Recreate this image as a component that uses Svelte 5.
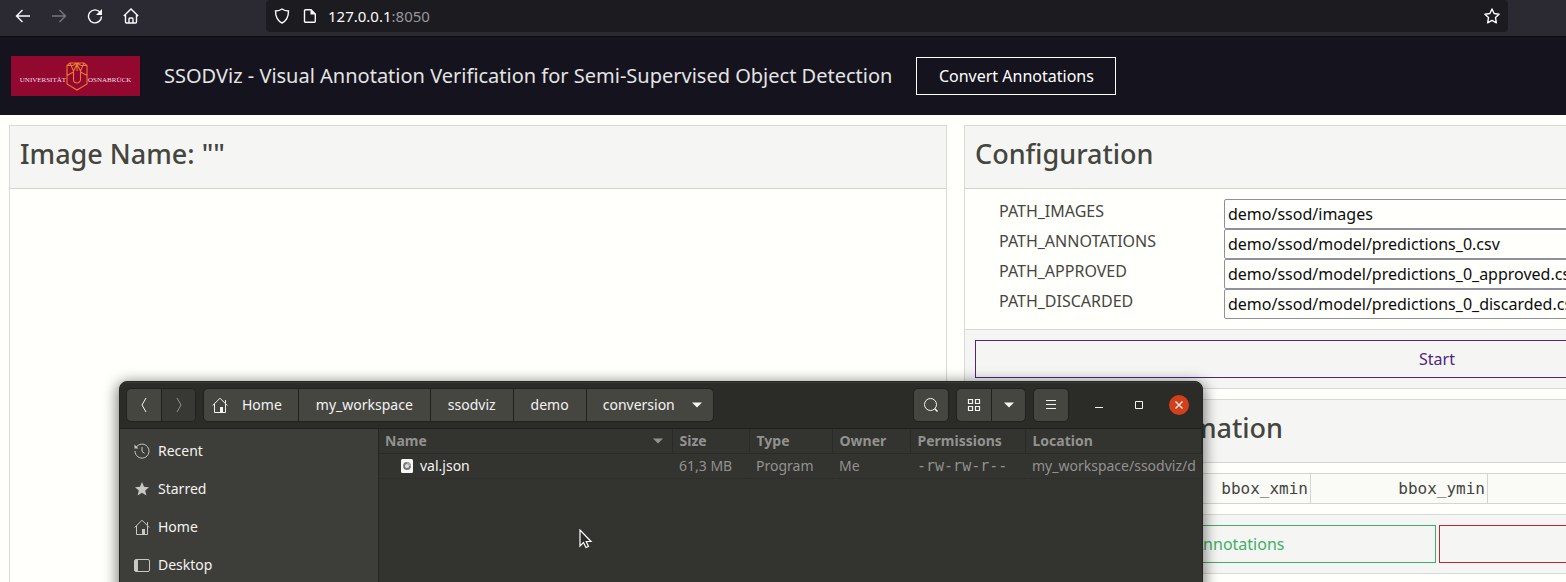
<script>
  const paths = [
    { id: 'images', label: 'PATH_IMAGES', value: 'demo/ssod/images' },
    { id: 'annotations', label: 'PATH_ANNOTATIONS', value: 'demo/ssod/model/predictions_0.csv' },
    { id: 'approved', label: 'PATH_APPROVED', value: 'demo/ssod/model/predictions_0_approved.csv' },
    { id: 'discarded', label: 'PATH_DISCARDED', value: 'demo/ssod/model/predictions_0_discarded.csv' }
  ];
  const crumbs = ['my_workspace', 'ssodviz', 'demo'];
  const places = ['Recent', 'Starred', 'Home', 'Desktop'];
</script>

{#snippet house()}
  <svg width="16" height="16" viewBox="0 0 16 16" fill="none" stroke="currentColor">
    <path d="M.7 8.5 8 1.2l7.3 7.3M2.5 7v8.5h11V7M13.5 6V3" />
    <path d="M8 10h3v5.5H8z" fill="currentColor" stroke="none" />
  </svg>
{/snippet}

<div class="screen">
  <nav class="toolbar" aria-label="Browser">
    <button class="nav" aria-label="Back">
      <svg width="16" height="16" viewBox="0 0 16 16"><path d="M15 8H1.5M7.5 2l-6 6 6 6" /></svg>
    </button>
    <button class="nav dim" aria-label="Forward">
      <svg width="16" height="16" viewBox="0 0 16 16"><path d="M1 8h13.5M8.5 2l6 6-6 6" /></svg>
    </button>
    <button class="nav" aria-label="Reload">
      <svg width="16" height="16" viewBox="0 0 16 16"><path d="M13 4.200A6.500 6.500 0 1 0 14.500 8.500" /><path d="M15 1v6H9z" fill="currentColor" stroke="none" /></svg>
    </button>
    <button class="nav" aria-label="Home page">
      <svg width="16" height="16" viewBox="0 0 16 16"><path d="M.8 8 8 1l7.200 7M2.500 7v7a1 1 0 0 0 1 1h9a1 1 0 0 0 1-1V7M6 15v-4a1 1 0 0 1 1-1h2a1 1 0 0 1 1 1v4" /></svg>
    </button>
    <div class="urlbar">
      <svg width="16" height="16" viewBox="0 0 16 16"><path d="M8 1c2 1.500 4.300 2 6.500 2 0 5.500-1.500 9.500-6.500 12C3 12.500 1.500 8.500 1.500 3 3.700 3 6 2.500 8 1z" /></svg>
      <svg class="doc" width="16" height="16" viewBox="0 0 16 16"><path d="M3.500 1.700h5.500l4.300 4.300v7.300a1 1 0 0 1-1 1H3.500a1 1 0 0 1-1-1V2.700a1 1 0 0 1 1-1z" /><path d="M8.500 1.500v5h5z" fill="currentColor" stroke="none" /></svg>
      <span class="url">127.0.0.1<span class="port">:8050</span></span>
      <button class="star" aria-label="Bookmark">
        <svg width="16" height="16" viewBox="0 0 16 16"><path d="M8 1l2.100 4.500 5 .7-3.600 3.400.9 5.200L8 12.400l-4.400 2.400.9-5.200L.9 6.200l5-.7z" stroke-linejoin="round" /></svg>
      </button>
    </div>
  </nav>

  <header class="banner">
    <div class="logo">
      <span>UNIVERSITÄT</span>
      <svg width="22" height="30" viewBox="0 0 22 30" fill="none" stroke="#ea7a34" stroke-width="1.1">
        <path d="M4 2 1 4.500V23l10 6 10-6V4.500L18 2zM1 14.500 7.500 11M21 14.500 14.500 11M4 2l3.500 8v8.500a3.500 3.500 0 0 0 7 0V10L18 2M1 4.500h6L11 2l4 2.500h6M11 2v8M11 3 7.500 10M11 3l3.500 7" />
      </svg>
      <span>OSNABRÜCK</span>
    </div>
    <h1>SSODViz - Visual Annotation Verification for Semi-Supervised Object Detection</h1>
    <button class="convert">Convert Annotations</button>
  </header>

  <main>
    <section class="panel image">
      <h2>Image Name: ""</h2>
    </section>
    <div class="side">
      <section class="panel">
        <h2>Configuration</h2>
        <form>
          {#each paths as p}
            <label for={p.id}>{p.label}</label>
            <input id={p.id} type="text" value={p.value} />
          {/each}
        </form>
        <div class="actions"><button class="start">Start</button></div>
      </section>
      <section class="panel">
        <h2>Annotation Information</h2>
        <div class="tablebox">
          <table>
            <thead>
              <tr><th>image_id</th><th>bbox_xmin</th><th>bbox_ymin</th><th>bbox_xmax</th><th>bbox_ymax</th></tr>
            </thead>
          </table>
        </div>
        <div class="actions">
          <button class="approve">Approve Annotations</button>
          <button class="discard">Discard Annotations</button>
        </div>
      </section>
    </div>
  </main>

  <div class="window">
    <div class="titlebar">
      <div class="group">
        <button aria-label="Previous folder"><svg width="16" height="18" viewBox="0 0 16 18"><path d="M10 2 6 9l4 7" /></svg></button>
        <button class="off" aria-label="Next folder"><svg width="16" height="18" viewBox="0 0 16 18"><path d="M6 2l4 7-4 7" /></svg></button>
      </div>
      <div class="group crumbs">
        <button class="homecrumb">{@render house()}Home</button>
        {#each crumbs as c}<button>{c}</button>{/each}
        <button class="current">conversion<svg width="10" height="6" viewBox="0 0 10 6"><path d="M0 .5h10L5 5.500z" fill="currentColor" stroke="none" /></svg></button>
      </div>
      <div class="tools">
        <div class="group"><button aria-label="Search"><svg width="16" height="16" viewBox="0 0 16 16"><circle cx="7.500" cy="7.500" r="6" /><path d="M11.800 11.800 14.500 14.500" stroke-width="1.600" /></svg></button></div>
        <div class="group">
          <button aria-label="Grid view"><svg width="14" height="14" viewBox="0 0 14 14"><path d="M1.500 1.500h4v4h-4zM8.500 1.500h4v4h-4zM1.500 8.500h4v4h-4zM8.500 8.500h4v4h-4z" stroke-width="1.200" /></svg></button>
          <button aria-label="View options"><svg width="10" height="6" viewBox="0 0 10 6"><path d="M0 .5h10L5 5.500z" fill="currentColor" stroke="none" /></svg></button>
        </div>
        <div class="group"><button aria-label="Menu"><svg width="12" height="12" viewBox="0 0 12 12"><path d="M1 1.500h10M1 5.500h10M1 9.500h10" /></svg></button></div>
        <div class="wm">
          <button aria-label="Minimize"><svg width="20" height="20" viewBox="0 0 20 20"><path d="M6 12.500h8" /></svg></button>
          <button aria-label="Maximize"><svg width="20" height="20" viewBox="0 0 20 20"><path d="M6.500 6.500h7v7h-7z" /></svg></button>
          <button class="close" aria-label="Close"><svg width="20" height="20" viewBox="0 0 20 20"><path d="M6.500 6.500l7 7M13.500 6.500l-7 7" stroke-width="1.300" /></svg></button>
        </div>
      </div>
    </div>
    <div class="content">
      <ul class="places">
        {#each places as place}
          <li>
            {#if place === 'Recent'}
              <svg width="16" height="16" viewBox="0 0 16 16"><path d="M2 4.500a7 7 0 1 1-1 3.500M8 4v4.500l2.500 1.800" /><path d="M.5 1.500v4h4z" fill="currentColor" stroke="none" /></svg>
            {:else if place === 'Starred'}
              <svg width="16" height="16" viewBox="0 0 16 16"><path d="M8 1l2 4.800 5 .4-3.800 3.300 1.200 5L8 11.800l-4.400 2.700 1.200-5L1 6.200l5-.4z" fill="currentColor" stroke="none" /></svg>
            {:else if place === 'Home'}
              {@render house()}
            {:else}
              <svg width="16" height="16" viewBox="0 0 16 16"><rect x=".5" y="2.500" width="15" height="12" rx="1.500" /><path d="M1 3h3v11H1z" fill="currentColor" stroke="none" /></svg>
            {/if}
            <span>{place}</span>
          </li>
        {/each}
      </ul>
      <div class="files">
        <table>
          <colgroup><col class="c1" /><col class="c2" /><col class="c3" /><col class="c4" /><col class="c5" /><col /></colgroup>
          <thead>
            <tr>
              <th><div class="sort">Name<svg width="10" height="6" viewBox="0 0 10 6"><path d="M0 .5h10L5 5.500z" fill="currentColor" /></svg></div></th>
              <th>Size</th><th>Type</th><th>Owner</th><th>Permissions</th><th>Location</th>
            </tr>
          </thead>
          <tbody>
            <tr>
              <td>
                <div class="file">
                  <svg width="12" height="14" viewBox="0 0 12 14"><rect width="12" height="14" rx="1.500" fill="#f7f7f5" /><circle cx="6" cy="7" r="3" fill="#ddd" stroke="#777" stroke-width="1.800" /><path d="M6 4a3 3 0 0 1 3 3" fill="none" stroke="#aaa" stroke-width="1.800" /></svg>
                  val.json
                </div>
              </td>
              <td>61,3 MB</td><td>Program</td><td>Me</td><td class="mono">-rw-rw-r--</td><td>my_workspace/ssodviz/d</td>
            </tr>
          </tbody>
        </table>
      </div>
    </div>
  </div>

  <svg class="pointer" width="14" height="20" viewBox="0 0 14 20">
    <path d="M1 1v16l3.500-3.500L7 18.500l2.500-1-2.300-5H12z" fill="#2b2b28" stroke="#fff" stroke-width="1.200" />
  </svg>
</div>

<style>
  :global(body) { margin: 0; background: #fffffc; }
  .screen {
    position: relative;
    height: 100vh;
    overflow: hidden;
    background: #fffffc;
    color: #454540;
    font: 16px/24px "Noto Sans", sans-serif;
  }
  .screen * { box-sizing: border-box; }
  button { font: inherit; color: inherit; background: none; border: 0; padding: 0; margin: 0; }
  svg { display: block; flex: none; }

  .toolbar {
    display: flex;
    height: 37px;
    padding: 0 58px 4px 5px;
    background: #2b2a33;
    border-bottom: 1px solid #0c0c0e;
    color: #fbfbfe;
  }
  .toolbar svg, .titlebar svg, .places svg { fill: none; stroke: currentColor; }
  .toolbar svg { stroke-width: 1.4; }
  .nav { display: grid; place-items: center; width: 36px; }
  .nav.dim { color: #77767d; }
  .urlbar {
    display: flex;
    flex: 1;
    align-items: center;
    margin-left: 117px;
    padding: 0 8px;
    background: #1c1b1f;
    border-radius: 4px;
  }
  .doc { margin: 0 10px 0 12px; }
  .url { font-size: 15px; }
  .port { color: #97979d; }
  .star { margin-left: auto; }

  .banner {
    display: flex;
    align-items: center;
    height: 78px;
    padding: 0 11px;
    background: #15131d;
    color: #e4e4e4;
    white-space: nowrap;
  }
  .logo {
    display: flex;
    align-items: center;
    justify-content: center;
    width: 129px;
    height: 40px;
    background: #92082f;
    color: #f3dfe4;
    font: 7px/10px "Liberation Serif", serif;
  }
  .logo span { padding-top: 8px; }
  h1 { margin: 0 24px; font-size: 20px; line-height: 28px; font-weight: 400; }
  .convert { height: 38px; width: 200px; border: 1px solid #fff; color: #fff; }

  main {
    display: grid;
    grid-template-columns: 938fr 946fr;
    gap: 17px;
    min-width: 1919px;
    padding: 10px 9px;
  }
  .side { display: flex; flex-direction: column; gap: 10px; }
  .panel { border: 1px solid #d8dad5; }
  .panel.image { min-height: 600px; }
  h2 {
    margin: 0;
    padding: 11px 10px 17px;
    background: #f5f6f3;
    border-bottom: 1px solid #d3d5d0;
    font-size: 27px;
    line-height: 34px;
    font-weight: 500;
  }
  form {
    display: grid;
    grid-template-columns: 225px 1fr;
    grid-auto-rows: 30px;
    padding: 10px 34px;
  }
  input {
    width: 100%;
    min-width: 0;
    padding: 1px 3px;
    border: 1px solid #8f8f9d;
    border-radius: 2px;
    background: #fffffc;
    color: #0c0c0d;
    font: inherit;
  }
  .actions {
    display: flex;
    gap: 3px;
    padding: 10px;
    background: #f5f6f3;
    border-top: 1px solid #d8dad5;
  }
  .actions button { flex: 1; height: 38px; border: 1px solid; }
  .actions .start { color: #4f2483; }
  .actions .approve { color: #3fae68; }
  .actions .discard { color: #bb2a31; }
  .tablebox { padding: 10px; }
  .tablebox table { width: 100%; border-collapse: collapse; table-layout: fixed; }
  .tablebox th {
    width: 177px;
    height: 30px;
    padding: 0 2px;
    border: 1px solid #d3d5d0;
    background: #fafaf7;
    text-align: right;
    font: 16px/28px "DejaVu Sans Mono", monospace;
  }
  .tablebox th:first-child { width: 158px; }
  .tablebox th:last-child { width: auto; }

  .window {
    position: absolute;
    left: 119px;
    top: 381px;
    width: 1084px;
    height: 420px;
    display: flex;
    flex-direction: column;
    border: 1px solid #262723;
    border-radius: 8px 8px 0 0;
    background: #33332f;
    box-shadow: 0 3px 14px 2px rgba(0, 0, 0, .5);
    color: #f3f3f1;
    font-size: 14px;
    overflow: hidden;
  }
  .titlebar {
    display: flex;
    align-items: center;
    gap: 7px;
    height: 47px;
    padding: 0 13px 2px 6px;
    background: #2b2b28;
    border-top: 1px solid #3a3b37;
    border-bottom: 1px solid #20201d;
  }
  .group {
    display: flex;
    height: 34px;
    border: 1px solid #21211e;
    border-radius: 5px;
    background: #464641;
    overflow: hidden;
  }
  .group button { display: flex; align-items: center; justify-content: center; min-width: 34px; }
  .group button + button { border-left: 1px solid #21211e; }
  .group .off { background: #383834; color: #92928e; }
  .crumbs button { padding: 0 17px; }
  .crumbs .homecrumb { padding: 0 16px 0 8px; gap: 14px; }
  .crumbs .current { gap: 17px; padding: 0 11px 0 16px; }
  .tools { display: flex; align-items: center; gap: 7px; margin-left: auto; }
  .wm { display: flex; gap: 20px; margin-left: 13px; }
  .wm .close { border-radius: 50%; background: #d2401b; }
  .content { display: flex; flex: 1; min-height: 0; }
  .places {
    width: 259px;
    margin: 0;
    padding: 3px 14px;
    list-style: none;
    background: #3d3d39;
    border-right: 1px solid #252522;
  }
  .places li { display: flex; align-items: center; gap: 8px; height: 38px; }
  .places svg { color: #c7c7c4; }
  .files { flex: 1; min-width: 0; overflow: hidden; }
  .files table { width: 100%; border-collapse: collapse; table-layout: fixed; }
  .c1 { width: 293px; }
  .c2 { width: 77px; }
  .c3 { width: 83px; }
  .c4 { width: 78px; }
  .c5 { width: 115px; }
  .files th, .files td {
    padding: 0 0 0 7px;
    height: 24px;
    line-height: 24px;
    text-align: left;
    white-space: nowrap;
    color: #92928f;
    border-bottom: 1px solid #2a2a27;
  }
  .files th { font-weight: 700; border-right: 1px solid #2a2a27; }
  .files th:first-child { padding: 0 6px; }
  .files td { border-bottom-style: dotted; }
  .sort { display: flex; align-items: center; justify-content: space-between; padding-right: 3px; }
  .files .mono { font-family: "DejaVu Sans Mono", monospace; font-size: 15px; }
  .file { display: flex; align-items: center; gap: 7px; padding-left: 15px; color: #f3f3f1; }
  .pointer { position: absolute; left: 579px; top: 529px; }
</style>
